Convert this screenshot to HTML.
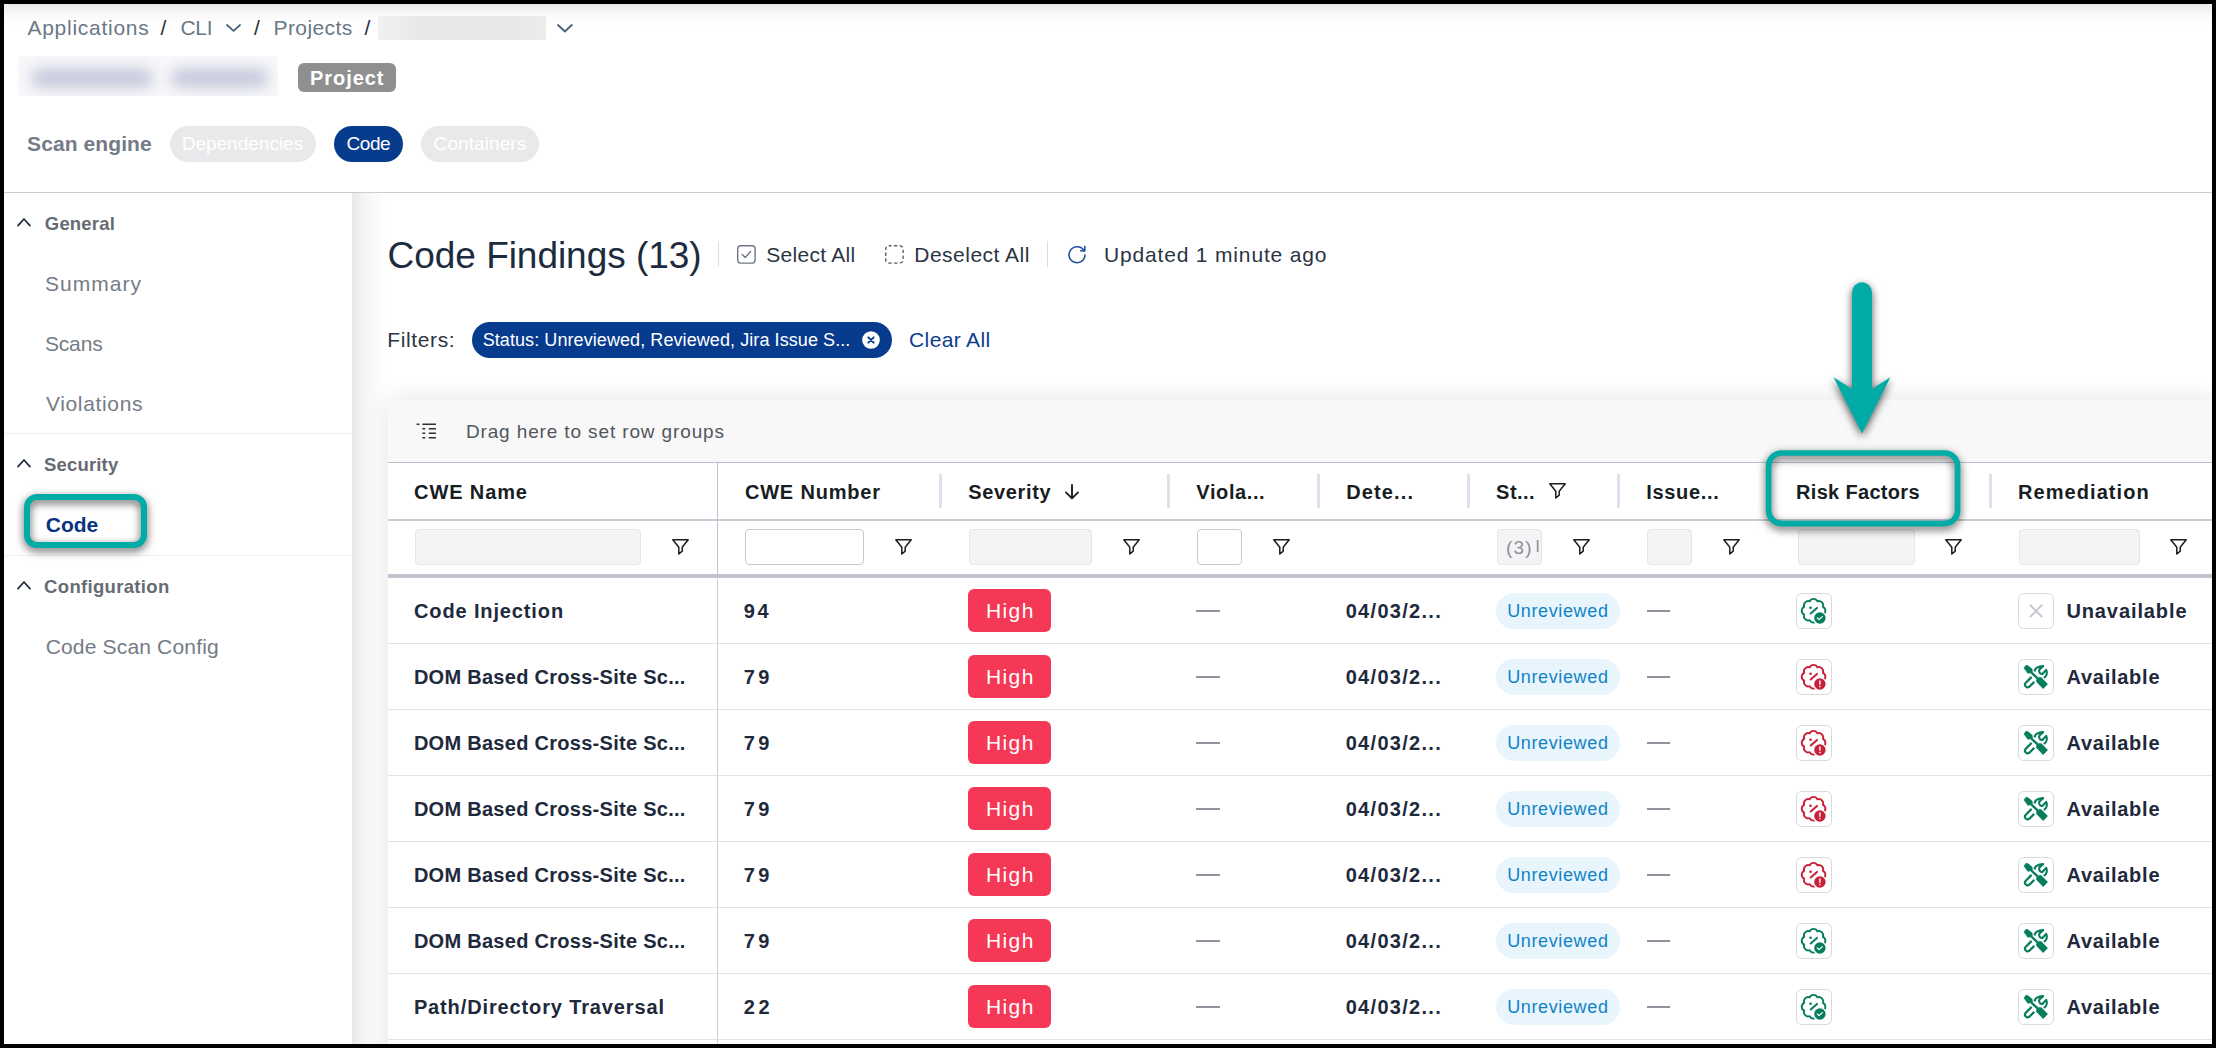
<!DOCTYPE html>
<html lang="en"><head><meta charset="utf-8"><title>Code Findings</title>
<style>
html,body{margin:0;padding:0;background:#000;}
body{width:2216px;height:1048px;overflow:hidden;position:relative;font-family:"Liberation Sans",sans-serif;}
#page{position:absolute;left:0;top:0;width:2216px;height:1048px;background:#fff;overflow:hidden;}
#frame{position:absolute;left:0;top:0;width:2208px;height:1040px;border:4px solid #000;z-index:100;pointer-events:none;}
#page div,#page span,#page svg{position:absolute;box-sizing:border-box;}
.t{white-space:pre;font-family:"Liberation Sans",sans-serif;z-index:5;}
.clip{overflow:hidden;width:33px;}
.hl{background:#ccd3df;height:1px;}
.rowl{background:#dde2eb;height:1px;left:388px;width:1824px;z-index:4;}
.colsep{background:#dde1ec;width:3px;top:474px;height:34px;}
.fin{height:36px;top:529px;border-radius:4px;}
.fin.dis{background:#f4f4f6;border:1px solid #e4e5e9;}
.fin.en{background:#fff;border:1px solid #c5c9d1;}
.badge{background:#f53856;border-radius:6px;left:968px;width:83px;height:43px;}
.pill{background:#e8f5fd;border-radius:18px;left:1496px;width:123.5px;height:36px;}
.dash{background:#8f949c;height:2px;width:23.5px;}
.ibox{width:36px;height:36px;border:1.4px solid #dadada;border-radius:5.5px;background:#fff;}
.ibox svg{left:-1.3px;top:-1.3px;}

</style></head>
<body>
<div id="page">
<div style="left:4px;top:4px;width:2208px;height:24px;background:linear-gradient(#eaeaea,#f5f5f5 28%,#fbfbfb 58%,#ffffff)"></div>
<div style="left:378px;top:16px;width:168px;height:24px;background:linear-gradient(90deg,#f1f1f1,#e8e8e9 25%,#e8e8e9 80%,#ececec)"></div>
<svg style="left:224.58px;top:23.209999999999997px" width="17.039999999999964" height="9.910000000000007" viewBox="-2 -2 17.039999999999964 9.910000000000007"><path d="M0 0 L6.519999999999982 5.910000000000007 L13.039999999999964 0" fill="none" stroke="#4a5f7a" stroke-width="1.8" stroke-linecap="round" stroke-linejoin="round"/></svg>
<svg style="left:556.08px;top:22.61px" width="17.839999999999918" height="10.510000000000005" viewBox="-2 -2 17.839999999999918 10.510000000000005"><path d="M0 0 L6.919999999999959 6.510000000000005 L13.839999999999918 0" fill="none" stroke="#4a5f7a" stroke-width="1.8" stroke-linecap="round" stroke-linejoin="round"/></svg>
<div style="left:18px;top:56px;width:260px;height:40px;background:#f8f8fa;overflow:hidden"><div style="left:13px;top:12px;width:122px;height:20px;border-radius:9px;background:#c6cadc;filter:blur(7px)"></div><div style="left:153px;top:12px;width:97px;height:20px;border-radius:9px;background:#c6cadc;filter:blur(7px)"></div></div>
<div style="left:298px;top:63px;width:98px;height:29px;border-radius:6px;background:#8f8f8f"></div>
<div style="left:170px;top:126px;width:146px;height:36px;border-radius:18px;background:#e9e9ec"></div>
<div style="left:334px;top:126px;width:69px;height:36px;border-radius:18px;background:#073b8e"></div>
<div style="left:421px;top:126px;width:118px;height:36px;border-radius:18px;background:#e9e9ec"></div>
<div style="left:4px;top:192px;width:2208px;height:1px;background:#cbcfd5"></div>
<div style="left:352px;top:193px;width:34px;height:855px;background:linear-gradient(90deg,rgba(0,0,0,.09),rgba(0,0,0,.035) 40%,rgba(0,0,0,0))"></div>
<div style="left:4px;top:433px;width:348px;height:1px;background:#eeeef3"></div>
<div style="left:4px;top:555px;width:348px;height:1px;background:#eeeef3"></div>
<svg style="left:16.22px;top:216.52px" width="15.96" height="10.61499999999998" viewBox="-2 -2 15.96 10.61499999999998"><path d="M0 6.614999999999981 L5.98 0 L11.96 6.614999999999981" fill="none" stroke="#1b2a3a" stroke-width="1.7" stroke-linecap="round" stroke-linejoin="round"/></svg>
<svg style="left:16.22px;top:458.21999999999997px" width="15.96" height="10.615000000000009" viewBox="-2 -2 15.96 10.615000000000009"><path d="M0 6.615000000000009 L5.98 0 L11.96 6.615000000000009" fill="none" stroke="#1b2a3a" stroke-width="1.7" stroke-linecap="round" stroke-linejoin="round"/></svg>
<svg style="left:16.22px;top:579.7199999999999px" width="15.96" height="10.615000000000123" viewBox="-2 -2 15.96 10.615000000000123"><path d="M0 6.615000000000123 L5.98 0 L11.96 6.615000000000123" fill="none" stroke="#1b2a3a" stroke-width="1.7" stroke-linecap="round" stroke-linejoin="round"/></svg>
<div style="left:718px;top:240.5px;width:1px;height:26px;background:#d9dce2"></div>
<div style="left:1047px;top:240.5px;width:1px;height:26px;background:#d9dce2"></div>
<svg style="left:736px;top:244px" width="21" height="21" viewBox="0 0 21 21"><rect x="1.7" y="1.7" width="17.4" height="17.4" rx="3" fill="none" stroke="#6f7782" stroke-width="1.4"/><path d="M6.2 10.6 L9.2 13.4 L14.6 7.6" fill="none" stroke="#6f7782" stroke-width="1.4" stroke-linecap="round" stroke-linejoin="round"/></svg>
<svg style="left:883.5px;top:244px" width="21" height="21" viewBox="0 0 21 21"><rect x="1.7" y="1.7" width="17.4" height="17.4" rx="3.4" fill="none" stroke="#59616c" stroke-width="1.4" stroke-dasharray="3.4 2.4" stroke-dashoffset="1"/></svg>
<svg style="left:1065px;top:243px" width="24" height="24" viewBox="0 0 24 24"><path d="M19.2 8.2 A8 8 0 1 0 20 12" fill="none" stroke="#1d4f9f" stroke-width="1.6" stroke-linecap="round"/><path d="M15.6 7.8 H19.8 V3.6" fill="none" stroke="#1d4f9f" stroke-width="1.6" stroke-linecap="round" stroke-linejoin="round"/></svg>
<div style="left:472px;top:322px;width:420px;height:36px;border-radius:18px;background:#073b8e"></div>
<svg style="left:861px;top:330px;z-index:6" width="20" height="20" viewBox="0 0 20 20"><circle cx="10" cy="10" r="8.8" fill="#fff"/><path d="M7.3 7.3 L12.7 12.7 M12.7 7.3 L7.3 12.7" stroke="#073b8e" stroke-width="1.9" stroke-linecap="round"/></svg>
<div style="left:388px;top:400px;width:1830px;height:700px;background:#fff;box-shadow:0 0 24px rgba(0,0,0,.115)"></div>
<div style="left:388px;top:400px;width:1824px;height:62px;background:#f8f8f8"></div>
<div style="left:388px;top:462px;width:1824px;height:1px;background:#b9c0cf"></div>
<svg style="left:415px;top:421px" width="24" height="20" viewBox="415 421 24 20"><g stroke="#2b3035" stroke-width="1.5"><path d="M416.6 424.2 H419.4 M422.4 424.2 H435.9"/><path d="M422.4 428.8 H425.2 M428.8 428.8 H435.9"/><path d="M422.4 433.3 H425.2 M428.8 433.3 H435.9"/><path d="M422.4 437.8 H425.2 M428.8 437.8 H435.9"/></g></svg>
<div style="left:388px;top:519px;width:1824px;height:2px;background:#c6cbd4"></div>
<div style="left:388px;top:574px;width:1824px;height:4px;background:#c1c5cd;z-index:4"></div>
<div style="left:717px;top:463px;width:1px;height:111px;background:#bcc3d0;z-index:3"></div><div style="left:717px;top:579px;width:1px;height:470px;background:#c9ced9;z-index:3"></div>
<div class="colsep" style="left:939px"></div>
<div class="colsep" style="left:1167px"></div>
<div class="colsep" style="left:1317px"></div>
<div class="colsep" style="left:1467px"></div>
<div class="colsep" style="left:1617px"></div>
<div class="colsep" style="left:1767px"></div>
<div class="colsep" style="left:1989px"></div>
<svg style="left:1062px;top:482px" width="20" height="20" viewBox="0 0 20 20"><path d="M10 3 V16.2 M4 10.4 L10 16.4 L16 10.4" fill="none" stroke="#181d1f" stroke-width="1.9" stroke-linecap="round" stroke-linejoin="round"/></svg>
<svg style="left:1548.1px;top:481.8px" width="19" height="18" viewBox="-1 -1 19 18"><path d="M0.8 0.8 H16.2 L10.2 8.2 V12.2 L6.8 15 V8.2 Z" fill="none" stroke="#181d1f" stroke-width="1.5" stroke-linejoin="round"/></svg>
<div class="fin dis" style="left:415px;width:225.5px"></div>
<div class="fin en" style="left:745px;width:119.4px"></div>
<div class="fin dis" style="left:968.6px;width:123.7px"></div>
<div class="fin en" style="left:1197px;width:44.8px"></div>
<div class="fin dis" style="left:1497.3px;width:45.2px"></div>
<div class="fin dis" style="left:1647px;width:45.4px"></div>
<div class="fin dis" style="left:1797.5px;width:117.0px"></div>
<div class="fin dis" style="left:2019px;width:120.5px"></div>
<svg style="left:670.9px;top:538.0px" width="19" height="18" viewBox="-1 -1 19 18"><path d="M0.8 0.8 H16.2 L10.2 8.2 V12.2 L6.8 15 V8.2 Z" fill="none" stroke="#181d1f" stroke-width="1.5" stroke-linejoin="round"/></svg>
<svg style="left:894.1px;top:538.0px" width="19" height="18" viewBox="-1 -1 19 18"><path d="M0.8 0.8 H16.2 L10.2 8.2 V12.2 L6.8 15 V8.2 Z" fill="none" stroke="#181d1f" stroke-width="1.5" stroke-linejoin="round"/></svg>
<svg style="left:1121.6px;top:538.0px" width="19" height="18" viewBox="-1 -1 19 18"><path d="M0.8 0.8 H16.2 L10.2 8.2 V12.2 L6.8 15 V8.2 Z" fill="none" stroke="#181d1f" stroke-width="1.5" stroke-linejoin="round"/></svg>
<svg style="left:1271.9px;top:538.0px" width="19" height="18" viewBox="-1 -1 19 18"><path d="M0.8 0.8 H16.2 L10.2 8.2 V12.2 L6.8 15 V8.2 Z" fill="none" stroke="#181d1f" stroke-width="1.5" stroke-linejoin="round"/></svg>
<svg style="left:1571.9px;top:538.0px" width="19" height="18" viewBox="-1 -1 19 18"><path d="M0.8 0.8 H16.2 L10.2 8.2 V12.2 L6.8 15 V8.2 Z" fill="none" stroke="#181d1f" stroke-width="1.5" stroke-linejoin="round"/></svg>
<svg style="left:1721.7px;top:538.0px" width="19" height="18" viewBox="-1 -1 19 18"><path d="M0.8 0.8 H16.2 L10.2 8.2 V12.2 L6.8 15 V8.2 Z" fill="none" stroke="#181d1f" stroke-width="1.5" stroke-linejoin="round"/></svg>
<svg style="left:1943.8px;top:538.0px" width="19" height="18" viewBox="-1 -1 19 18"><path d="M0.8 0.8 H16.2 L10.2 8.2 V12.2 L6.8 15 V8.2 Z" fill="none" stroke="#181d1f" stroke-width="1.5" stroke-linejoin="round"/></svg>
<svg style="left:2168.8px;top:538.0px" width="19" height="18" viewBox="-1 -1 19 18"><path d="M0.8 0.8 H16.2 L10.2 8.2 V12.2 L6.8 15 V8.2 Z" fill="none" stroke="#181d1f" stroke-width="1.5" stroke-linejoin="round"/></svg>
<div class="rowl" style="top:643px"></div>
<div class="badge" style="top:589px"></div>
<div class="dash" style="left:1196px;top:610px"></div>
<div class="pill" style="top:593px"></div>
<div class="dash" style="left:1646.6px;top:610px"></div>
<div class="ibox" style="left:1796px;top:593px"><svg width="36" height="36" viewBox="0 0 36 36"><path d="M21.43 8.37 A4.3 4.3 0 0 1 26.93 13.87 A4.3 4.3 0 0 1 26.93 21.63 A4.3 4.3 0 0 1 21.43 27.13 A4.3 4.3 0 0 1 13.67 27.13 A4.3 4.3 0 0 1 8.17 21.63 A4.3 4.3 0 0 1 8.17 13.87 A4.3 4.3 0 0 1 13.67 8.37 A4.3 4.3 0 0 1 21.43 8.37 Z" fill="none" stroke="#067d5c" stroke-width="1.9" stroke-linejoin="round"/><circle cx="14.55" cy="14.75" r="1.35" fill="#067d5c"/><path d="M14.7 20.5 L21.0 14.9" stroke="#067d5c" stroke-width="2.0" stroke-linecap="round"/><circle cx="23.9" cy="25.0" r="6.9" fill="#fff"/><circle cx="23.9" cy="25.0" r="5.7" fill="#067d5c"/><path d="M21.4 25.0 L23.1 26.6 L26.3 23.6" fill="none" stroke="#fff" stroke-width="1.25" stroke-linecap="round" stroke-linejoin="round"/></svg></div>
<div class="ibox" style="left:2018px;top:593px"><svg width="36" height="36" viewBox="0 0 36 36"><path d="M11.9 11.7 L24.3 24.1 M24.3 11.7 L11.9 24.1" stroke="#c3c6ce" stroke-width="1.9" stroke-linecap="butt"/></svg></div>
<div class="rowl" style="top:709px"></div>
<div class="badge" style="top:655px"></div>
<div class="dash" style="left:1196px;top:676px"></div>
<div class="pill" style="top:659px"></div>
<div class="dash" style="left:1646.6px;top:676px"></div>
<div class="ibox" style="left:1796px;top:659px"><svg width="36" height="36" viewBox="0 0 36 36"><path d="M21.43 8.37 A4.3 4.3 0 0 1 26.93 13.87 A4.3 4.3 0 0 1 26.93 21.63 A4.3 4.3 0 0 1 21.43 27.13 A4.3 4.3 0 0 1 13.67 27.13 A4.3 4.3 0 0 1 8.17 21.63 A4.3 4.3 0 0 1 8.17 13.87 A4.3 4.3 0 0 1 13.67 8.37 A4.3 4.3 0 0 1 21.43 8.37 Z" fill="none" stroke="#c9203a" stroke-width="1.9" stroke-linejoin="round"/><circle cx="14.55" cy="14.75" r="1.35" fill="#c9203a"/><path d="M14.7 20.5 L21.0 14.9" stroke="#c9203a" stroke-width="2.0" stroke-linecap="round"/><circle cx="23.9" cy="25.0" r="6.9" fill="#fff"/><circle cx="23.9" cy="25.0" r="5.7" fill="#c9203a"/><path d="M23.9 21.9 V25.3" stroke="#fff" stroke-width="1.4" stroke-linecap="round"/><circle cx="23.9" cy="27.6" r="0.8" fill="#fff"/></svg></div>
<div class="ibox" style="left:2018px;top:659px"><svg width="36" height="36" viewBox="2.3 2.1 36 36"><path d="M8.1 11.1 L10.4 8.1 L12.6 8.8 L16.6 12.2 L16.8 15.7 L12.2 16.6 Z" fill="#067d5c" stroke="#067d5c" stroke-width="0.3" stroke-linejoin="round"/><path d="M15.6 15.6 L22.2 21.8" stroke="#067d5c" stroke-width="2.4"/><path d="M20.7 22.6 L23.7 20.3 L25.6 20.7 L32.0 27.2 L27.5 31.8 L20.7 24.8 Z" fill="#067d5c" stroke="#067d5c" stroke-width="0.4" stroke-linejoin="round"/><path d="M15.9 20.0 L9.9 26.0 A2.7 2.7 0 0 0 13.7 29.8 L18.5 25.0" fill="none" stroke="#067d5c" stroke-width="2.2" stroke-linecap="butt"/><path d="M19.0 14.6 C18.7 11.4 22.6 9.3 27.4 9.2 L23.7 12.6 C22.7 14.9 24.3 17.4 26.6 17.1 L30.5 13.0 C32.0 15.9 30.7 19.2 28.2 21.0" fill="none" stroke="#067d5c" stroke-width="2.2" stroke-linejoin="round"/></svg></div>
<div class="rowl" style="top:775px"></div>
<div class="badge" style="top:721px"></div>
<div class="dash" style="left:1196px;top:742px"></div>
<div class="pill" style="top:725px"></div>
<div class="dash" style="left:1646.6px;top:742px"></div>
<div class="ibox" style="left:1796px;top:725px"><svg width="36" height="36" viewBox="0 0 36 36"><path d="M21.43 8.37 A4.3 4.3 0 0 1 26.93 13.87 A4.3 4.3 0 0 1 26.93 21.63 A4.3 4.3 0 0 1 21.43 27.13 A4.3 4.3 0 0 1 13.67 27.13 A4.3 4.3 0 0 1 8.17 21.63 A4.3 4.3 0 0 1 8.17 13.87 A4.3 4.3 0 0 1 13.67 8.37 A4.3 4.3 0 0 1 21.43 8.37 Z" fill="none" stroke="#c9203a" stroke-width="1.9" stroke-linejoin="round"/><circle cx="14.55" cy="14.75" r="1.35" fill="#c9203a"/><path d="M14.7 20.5 L21.0 14.9" stroke="#c9203a" stroke-width="2.0" stroke-linecap="round"/><circle cx="23.9" cy="25.0" r="6.9" fill="#fff"/><circle cx="23.9" cy="25.0" r="5.7" fill="#c9203a"/><path d="M23.9 21.9 V25.3" stroke="#fff" stroke-width="1.4" stroke-linecap="round"/><circle cx="23.9" cy="27.6" r="0.8" fill="#fff"/></svg></div>
<div class="ibox" style="left:2018px;top:725px"><svg width="36" height="36" viewBox="2.3 2.1 36 36"><path d="M8.1 11.1 L10.4 8.1 L12.6 8.8 L16.6 12.2 L16.8 15.7 L12.2 16.6 Z" fill="#067d5c" stroke="#067d5c" stroke-width="0.3" stroke-linejoin="round"/><path d="M15.6 15.6 L22.2 21.8" stroke="#067d5c" stroke-width="2.4"/><path d="M20.7 22.6 L23.7 20.3 L25.6 20.7 L32.0 27.2 L27.5 31.8 L20.7 24.8 Z" fill="#067d5c" stroke="#067d5c" stroke-width="0.4" stroke-linejoin="round"/><path d="M15.9 20.0 L9.9 26.0 A2.7 2.7 0 0 0 13.7 29.8 L18.5 25.0" fill="none" stroke="#067d5c" stroke-width="2.2" stroke-linecap="butt"/><path d="M19.0 14.6 C18.7 11.4 22.6 9.3 27.4 9.2 L23.7 12.6 C22.7 14.9 24.3 17.4 26.6 17.1 L30.5 13.0 C32.0 15.9 30.7 19.2 28.2 21.0" fill="none" stroke="#067d5c" stroke-width="2.2" stroke-linejoin="round"/></svg></div>
<div class="rowl" style="top:841px"></div>
<div class="badge" style="top:787px"></div>
<div class="dash" style="left:1196px;top:808px"></div>
<div class="pill" style="top:791px"></div>
<div class="dash" style="left:1646.6px;top:808px"></div>
<div class="ibox" style="left:1796px;top:791px"><svg width="36" height="36" viewBox="0 0 36 36"><path d="M21.43 8.37 A4.3 4.3 0 0 1 26.93 13.87 A4.3 4.3 0 0 1 26.93 21.63 A4.3 4.3 0 0 1 21.43 27.13 A4.3 4.3 0 0 1 13.67 27.13 A4.3 4.3 0 0 1 8.17 21.63 A4.3 4.3 0 0 1 8.17 13.87 A4.3 4.3 0 0 1 13.67 8.37 A4.3 4.3 0 0 1 21.43 8.37 Z" fill="none" stroke="#c9203a" stroke-width="1.9" stroke-linejoin="round"/><circle cx="14.55" cy="14.75" r="1.35" fill="#c9203a"/><path d="M14.7 20.5 L21.0 14.9" stroke="#c9203a" stroke-width="2.0" stroke-linecap="round"/><circle cx="23.9" cy="25.0" r="6.9" fill="#fff"/><circle cx="23.9" cy="25.0" r="5.7" fill="#c9203a"/><path d="M23.9 21.9 V25.3" stroke="#fff" stroke-width="1.4" stroke-linecap="round"/><circle cx="23.9" cy="27.6" r="0.8" fill="#fff"/></svg></div>
<div class="ibox" style="left:2018px;top:791px"><svg width="36" height="36" viewBox="2.3 2.1 36 36"><path d="M8.1 11.1 L10.4 8.1 L12.6 8.8 L16.6 12.2 L16.8 15.7 L12.2 16.6 Z" fill="#067d5c" stroke="#067d5c" stroke-width="0.3" stroke-linejoin="round"/><path d="M15.6 15.6 L22.2 21.8" stroke="#067d5c" stroke-width="2.4"/><path d="M20.7 22.6 L23.7 20.3 L25.6 20.7 L32.0 27.2 L27.5 31.8 L20.7 24.8 Z" fill="#067d5c" stroke="#067d5c" stroke-width="0.4" stroke-linejoin="round"/><path d="M15.9 20.0 L9.9 26.0 A2.7 2.7 0 0 0 13.7 29.8 L18.5 25.0" fill="none" stroke="#067d5c" stroke-width="2.2" stroke-linecap="butt"/><path d="M19.0 14.6 C18.7 11.4 22.6 9.3 27.4 9.2 L23.7 12.6 C22.7 14.9 24.3 17.4 26.6 17.1 L30.5 13.0 C32.0 15.9 30.7 19.2 28.2 21.0" fill="none" stroke="#067d5c" stroke-width="2.2" stroke-linejoin="round"/></svg></div>
<div class="rowl" style="top:907px"></div>
<div class="badge" style="top:853px"></div>
<div class="dash" style="left:1196px;top:874px"></div>
<div class="pill" style="top:857px"></div>
<div class="dash" style="left:1646.6px;top:874px"></div>
<div class="ibox" style="left:1796px;top:857px"><svg width="36" height="36" viewBox="0 0 36 36"><path d="M21.43 8.37 A4.3 4.3 0 0 1 26.93 13.87 A4.3 4.3 0 0 1 26.93 21.63 A4.3 4.3 0 0 1 21.43 27.13 A4.3 4.3 0 0 1 13.67 27.13 A4.3 4.3 0 0 1 8.17 21.63 A4.3 4.3 0 0 1 8.17 13.87 A4.3 4.3 0 0 1 13.67 8.37 A4.3 4.3 0 0 1 21.43 8.37 Z" fill="none" stroke="#c9203a" stroke-width="1.9" stroke-linejoin="round"/><circle cx="14.55" cy="14.75" r="1.35" fill="#c9203a"/><path d="M14.7 20.5 L21.0 14.9" stroke="#c9203a" stroke-width="2.0" stroke-linecap="round"/><circle cx="23.9" cy="25.0" r="6.9" fill="#fff"/><circle cx="23.9" cy="25.0" r="5.7" fill="#c9203a"/><path d="M23.9 21.9 V25.3" stroke="#fff" stroke-width="1.4" stroke-linecap="round"/><circle cx="23.9" cy="27.6" r="0.8" fill="#fff"/></svg></div>
<div class="ibox" style="left:2018px;top:857px"><svg width="36" height="36" viewBox="2.3 2.1 36 36"><path d="M8.1 11.1 L10.4 8.1 L12.6 8.8 L16.6 12.2 L16.8 15.7 L12.2 16.6 Z" fill="#067d5c" stroke="#067d5c" stroke-width="0.3" stroke-linejoin="round"/><path d="M15.6 15.6 L22.2 21.8" stroke="#067d5c" stroke-width="2.4"/><path d="M20.7 22.6 L23.7 20.3 L25.6 20.7 L32.0 27.2 L27.5 31.8 L20.7 24.8 Z" fill="#067d5c" stroke="#067d5c" stroke-width="0.4" stroke-linejoin="round"/><path d="M15.9 20.0 L9.9 26.0 A2.7 2.7 0 0 0 13.7 29.8 L18.5 25.0" fill="none" stroke="#067d5c" stroke-width="2.2" stroke-linecap="butt"/><path d="M19.0 14.6 C18.7 11.4 22.6 9.3 27.4 9.2 L23.7 12.6 C22.7 14.9 24.3 17.4 26.6 17.1 L30.5 13.0 C32.0 15.9 30.7 19.2 28.2 21.0" fill="none" stroke="#067d5c" stroke-width="2.2" stroke-linejoin="round"/></svg></div>
<div class="rowl" style="top:973px"></div>
<div class="badge" style="top:919px"></div>
<div class="dash" style="left:1196px;top:940px"></div>
<div class="pill" style="top:923px"></div>
<div class="dash" style="left:1646.6px;top:940px"></div>
<div class="ibox" style="left:1796px;top:923px"><svg width="36" height="36" viewBox="0 0 36 36"><path d="M21.43 8.37 A4.3 4.3 0 0 1 26.93 13.87 A4.3 4.3 0 0 1 26.93 21.63 A4.3 4.3 0 0 1 21.43 27.13 A4.3 4.3 0 0 1 13.67 27.13 A4.3 4.3 0 0 1 8.17 21.63 A4.3 4.3 0 0 1 8.17 13.87 A4.3 4.3 0 0 1 13.67 8.37 A4.3 4.3 0 0 1 21.43 8.37 Z" fill="none" stroke="#067d5c" stroke-width="1.9" stroke-linejoin="round"/><circle cx="14.55" cy="14.75" r="1.35" fill="#067d5c"/><path d="M14.7 20.5 L21.0 14.9" stroke="#067d5c" stroke-width="2.0" stroke-linecap="round"/><circle cx="23.9" cy="25.0" r="6.9" fill="#fff"/><circle cx="23.9" cy="25.0" r="5.7" fill="#067d5c"/><path d="M21.4 25.0 L23.1 26.6 L26.3 23.6" fill="none" stroke="#fff" stroke-width="1.25" stroke-linecap="round" stroke-linejoin="round"/></svg></div>
<div class="ibox" style="left:2018px;top:923px"><svg width="36" height="36" viewBox="2.3 2.1 36 36"><path d="M8.1 11.1 L10.4 8.1 L12.6 8.8 L16.6 12.2 L16.8 15.7 L12.2 16.6 Z" fill="#067d5c" stroke="#067d5c" stroke-width="0.3" stroke-linejoin="round"/><path d="M15.6 15.6 L22.2 21.8" stroke="#067d5c" stroke-width="2.4"/><path d="M20.7 22.6 L23.7 20.3 L25.6 20.7 L32.0 27.2 L27.5 31.8 L20.7 24.8 Z" fill="#067d5c" stroke="#067d5c" stroke-width="0.4" stroke-linejoin="round"/><path d="M15.9 20.0 L9.9 26.0 A2.7 2.7 0 0 0 13.7 29.8 L18.5 25.0" fill="none" stroke="#067d5c" stroke-width="2.2" stroke-linecap="butt"/><path d="M19.0 14.6 C18.7 11.4 22.6 9.3 27.4 9.2 L23.7 12.6 C22.7 14.9 24.3 17.4 26.6 17.1 L30.5 13.0 C32.0 15.9 30.7 19.2 28.2 21.0" fill="none" stroke="#067d5c" stroke-width="2.2" stroke-linejoin="round"/></svg></div>
<div class="rowl" style="top:1039px"></div>
<div class="badge" style="top:985px"></div>
<div class="dash" style="left:1196px;top:1006px"></div>
<div class="pill" style="top:989px"></div>
<div class="dash" style="left:1646.6px;top:1006px"></div>
<div class="ibox" style="left:1796px;top:989px"><svg width="36" height="36" viewBox="0 0 36 36"><path d="M21.43 8.37 A4.3 4.3 0 0 1 26.93 13.87 A4.3 4.3 0 0 1 26.93 21.63 A4.3 4.3 0 0 1 21.43 27.13 A4.3 4.3 0 0 1 13.67 27.13 A4.3 4.3 0 0 1 8.17 21.63 A4.3 4.3 0 0 1 8.17 13.87 A4.3 4.3 0 0 1 13.67 8.37 A4.3 4.3 0 0 1 21.43 8.37 Z" fill="none" stroke="#067d5c" stroke-width="1.9" stroke-linejoin="round"/><circle cx="14.55" cy="14.75" r="1.35" fill="#067d5c"/><path d="M14.7 20.5 L21.0 14.9" stroke="#067d5c" stroke-width="2.0" stroke-linecap="round"/><circle cx="23.9" cy="25.0" r="6.9" fill="#fff"/><circle cx="23.9" cy="25.0" r="5.7" fill="#067d5c"/><path d="M21.4 25.0 L23.1 26.6 L26.3 23.6" fill="none" stroke="#fff" stroke-width="1.25" stroke-linecap="round" stroke-linejoin="round"/></svg></div>
<div class="ibox" style="left:2018px;top:989px"><svg width="36" height="36" viewBox="2.3 2.1 36 36"><path d="M8.1 11.1 L10.4 8.1 L12.6 8.8 L16.6 12.2 L16.8 15.7 L12.2 16.6 Z" fill="#067d5c" stroke="#067d5c" stroke-width="0.3" stroke-linejoin="round"/><path d="M15.6 15.6 L22.2 21.8" stroke="#067d5c" stroke-width="2.4"/><path d="M20.7 22.6 L23.7 20.3 L25.6 20.7 L32.0 27.2 L27.5 31.8 L20.7 24.8 Z" fill="#067d5c" stroke="#067d5c" stroke-width="0.4" stroke-linejoin="round"/><path d="M15.9 20.0 L9.9 26.0 A2.7 2.7 0 0 0 13.7 29.8 L18.5 25.0" fill="none" stroke="#067d5c" stroke-width="2.2" stroke-linecap="butt"/><path d="M19.0 14.6 C18.7 11.4 22.6 9.3 27.4 9.2 L23.7 12.6 C22.7 14.9 24.3 17.4 26.6 17.1 L30.5 13.0 C32.0 15.9 30.7 19.2 28.2 21.0" fill="none" stroke="#067d5c" stroke-width="2.2" stroke-linejoin="round"/></svg></div>
<svg style="left:8px;top:478px;z-index:20;filter:drop-shadow(0.3px 3px 4px rgba(0,0,0,.68))" width="160" height="90" viewBox="8 478 160 90"><rect x="27" y="497" width="117" height="48" rx="10" fill="none" stroke="#02aca6" stroke-width="6"/></svg>
<svg style="left:1750px;top:435px;z-index:20;filter:drop-shadow(0.3px 3px 4px rgba(0,0,0,.68))" width="230" height="110" viewBox="1750 435 230 110"><rect x="1768.6" y="453" width="189" height="70.6" rx="13" fill="none" stroke="#02aca6" stroke-width="5.6"/></svg>
<svg style="left:1810px;top:270px;z-index:20;filter:drop-shadow(0.3px 3px 4px rgba(0,0,0,.68))" width="110" height="180" viewBox="1810 270 110 180"><path d="M1862 292.2 V395" stroke="#02aca6" stroke-width="20" stroke-linecap="round" fill="none"/><path d="M1833.6 377.2 L1852 388.9 L1872 388.9 L1890.4 377.2 L1862 433.5 Z" fill="#02aca6"/></svg>
<!-- text layer -->
<span class="t" style="left:27.4px;top:17.0px;font-size:21px;line-height:21px;font-weight:400;color:#6b7785;letter-spacing:0.74px">Applications</span>
<span class="t" style="left:160.4px;top:17.0px;font-size:21px;line-height:21px;font-weight:400;color:#1f2d3d;letter-spacing:0px">/</span>
<span class="t" style="left:180.5px;top:17.0px;font-size:21px;line-height:21px;font-weight:400;color:#6b7785;letter-spacing:-0.3px">CLI</span>
<span class="t" style="left:253.9px;top:17.0px;font-size:21px;line-height:21px;font-weight:400;color:#1f2d3d;letter-spacing:0px">/</span>
<span class="t" style="left:273.5px;top:17.0px;font-size:21px;line-height:21px;font-weight:400;color:#6b7785;letter-spacing:0.4px">Projects</span>
<span class="t" style="left:364.4px;top:17.0px;font-size:21px;line-height:21px;font-weight:400;color:#1f2d3d;letter-spacing:0px">/</span>
<span class="t" style="left:310.0px;top:68.1px;font-size:20px;line-height:20px;font-weight:700;color:#ffffff;letter-spacing:0.95px">Project</span>
<span class="t" style="left:27.1px;top:133.2px;font-size:21px;line-height:21px;font-weight:700;color:#747b86;letter-spacing:0.09px">Scan engine</span>
<span class="t" style="left:181.7px;top:134.3px;font-size:19px;line-height:19px;font-weight:400;color:#ffffff;letter-spacing:-0.0px">Dependencies</span>
<span class="t" style="left:346.6px;top:134.3px;font-size:19px;line-height:19px;font-weight:400;color:#ffffff;letter-spacing:-0.45px">Code</span>
<span class="t" style="left:433.6px;top:134.3px;font-size:19px;line-height:19px;font-weight:400;color:#ffffff;letter-spacing:0.08px">Containers</span>
<span class="t" style="left:44.8px;top:214.6px;font-size:18.5px;line-height:18.5px;font-weight:700;color:#666b73;letter-spacing:0.19px">General</span>
<span class="t" style="left:44.9px;top:272.9px;font-size:21px;line-height:21px;font-weight:400;color:#757b85;letter-spacing:1.05px">Summary</span>
<span class="t" style="left:44.9px;top:332.7px;font-size:21px;line-height:21px;font-weight:400;color:#757b85;letter-spacing:-0.15px">Scans</span>
<span class="t" style="left:45.9px;top:392.8px;font-size:21px;line-height:21px;font-weight:400;color:#757b85;letter-spacing:0.66px">Violations</span>
<span class="t" style="left:44.1px;top:456.1px;font-size:18.5px;line-height:18.5px;font-weight:700;color:#666b73;letter-spacing:0.16px">Security</span>
<span class="t" style="left:45.8px;top:513.7px;font-size:21px;line-height:21px;font-weight:700;color:#0b3282;letter-spacing:-0.08px">Code</span>
<span class="t" style="left:44.1px;top:577.5px;font-size:18.5px;line-height:18.5px;font-weight:700;color:#666b73;letter-spacing:0.32px">Configuration</span>
<span class="t" style="left:45.7px;top:636.4px;font-size:21px;line-height:21px;font-weight:400;color:#757b85;letter-spacing:0.17px">Code Scan Config</span>
<span class="t" style="left:387.6px;top:236.7px;font-size:37px;line-height:37px;font-weight:400;color:#1c2b3e;letter-spacing:-0.04px">Code Findings (13)</span>
<span class="t" style="left:766.3px;top:244.2px;font-size:21px;line-height:21px;font-weight:400;color:#2b3543;letter-spacing:0.28px">Select All</span>
<span class="t" style="left:914.3px;top:244.2px;font-size:21px;line-height:21px;font-weight:400;color:#2b3543;letter-spacing:0.49px">Deselect All</span>
<span class="t" style="left:1103.9px;top:244.2px;font-size:21px;line-height:21px;font-weight:400;color:#2b3543;letter-spacing:0.84px">Updated 1 minute ago</span>
<span class="t" style="left:387.3px;top:329.2px;font-size:21px;line-height:21px;font-weight:400;color:#2b3543;letter-spacing:0.63px">Filters:</span>
<span class="t" style="left:482.7px;top:330.8px;font-size:18px;line-height:18px;font-weight:400;color:#ffffff;letter-spacing:0.08px">Status: Unreviewed, Reviewed, Jira Issue S...</span>
<span class="t" style="left:909.1px;top:329.2px;font-size:21px;line-height:21px;font-weight:400;color:#0d3b8e;letter-spacing:0.36px">Clear All</span>
<span class="t" style="left:465.9px;top:421.9px;font-size:19px;line-height:19px;font-weight:400;color:#50565e;letter-spacing:0.87px">Drag here to set row groups</span>
<span class="t" style="left:414.1px;top:481.5px;font-size:20px;line-height:20px;font-weight:700;color:#181d1f;letter-spacing:0.88px">CWE Name</span>
<span class="t" style="left:744.9px;top:481.5px;font-size:20px;line-height:20px;font-weight:700;color:#181d1f;letter-spacing:0.82px">CWE Number</span>
<span class="t" style="left:968.3px;top:481.5px;font-size:20px;line-height:20px;font-weight:700;color:#181d1f;letter-spacing:0.64px">Severity</span>
<span class="t" style="left:1196.3px;top:481.5px;font-size:20px;line-height:20px;font-weight:700;color:#181d1f;letter-spacing:0.61px">Viola...</span>
<span class="t" style="left:1346.2px;top:481.5px;font-size:20px;line-height:20px;font-weight:700;color:#181d1f;letter-spacing:1.14px">Dete...</span>
<span class="t" style="left:1496.1px;top:481.5px;font-size:20px;line-height:20px;font-weight:700;color:#181d1f;letter-spacing:0.45px">St...</span>
<span class="t" style="left:1646.2px;top:481.5px;font-size:20px;line-height:20px;font-weight:700;color:#181d1f;letter-spacing:0.67px">Issue...</span>
<span class="t" style="left:1796.0px;top:481.5px;font-size:20px;line-height:20px;font-weight:700;color:#181d1f;letter-spacing:0.32px;z-index:30">Risk Factors</span>
<span class="t" style="left:2018.0px;top:481.5px;font-size:20px;line-height:20px;font-weight:700;color:#181d1f;letter-spacing:1.07px">Remediation</span>
<span class="t" style="left:1506.0px;top:537.7px;font-size:19px;line-height:19px;font-weight:400;color:#8d9097;letter-spacing:1.15px">(3)</span>
<span class="t" style="left:1535.2px;top:538.1px;font-size:17px;line-height:17px;font-weight:400;color:#8d9097;letter-spacing:0px">I</span>
<span class="t" style="left:414.0px;top:600.9px;font-size:20px;line-height:20px;font-weight:700;color:#1e293b;letter-spacing:0.87px">Code Injection</span>
<span class="t" style="left:743.7px;top:600.9px;font-size:20px;line-height:20px;font-weight:700;color:#1e293b;letter-spacing:2.66px">94</span>
<span class="t" style="left:985.9px;top:600.1px;font-size:21px;line-height:21px;font-weight:400;color:#ffffff;letter-spacing:1.41px">High</span>
<span class="t" style="left:1345.7px;top:600.9px;font-size:20px;line-height:20px;font-weight:700;color:#1e293b;letter-spacing:1.3px">04/03/2...</span>
<span class="t" style="left:1507.2px;top:602.4px;font-size:18px;line-height:18px;font-weight:400;color:#1083c7;letter-spacing:0.63px">Unreviewed</span>
<span class="t" style="left:2066.4px;top:600.9px;font-size:20px;line-height:20px;font-weight:700;color:#1e293b;letter-spacing:0.9px">Unavailable</span>
<span class="t" style="left:413.9px;top:666.9px;font-size:20px;line-height:20px;font-weight:700;color:#1e293b;letter-spacing:0.28px">DOM Based Cross-Site Sc...</span>
<span class="t" style="left:743.7px;top:666.9px;font-size:20px;line-height:20px;font-weight:700;color:#1e293b;letter-spacing:3.53px">79</span>
<span class="t" style="left:985.9px;top:666.1px;font-size:21px;line-height:21px;font-weight:400;color:#ffffff;letter-spacing:1.41px">High</span>
<span class="t" style="left:1345.7px;top:666.9px;font-size:20px;line-height:20px;font-weight:700;color:#1e293b;letter-spacing:1.3px">04/03/2...</span>
<span class="t" style="left:1507.2px;top:668.4px;font-size:18px;line-height:18px;font-weight:400;color:#1083c7;letter-spacing:0.63px">Unreviewed</span>
<span class="t" style="left:2066.5px;top:666.9px;font-size:20px;line-height:20px;font-weight:700;color:#1e293b;letter-spacing:0.74px">Available</span>
<span class="t" style="left:413.9px;top:732.9px;font-size:20px;line-height:20px;font-weight:700;color:#1e293b;letter-spacing:0.28px">DOM Based Cross-Site Sc...</span>
<span class="t" style="left:743.7px;top:732.9px;font-size:20px;line-height:20px;font-weight:700;color:#1e293b;letter-spacing:3.53px">79</span>
<span class="t" style="left:985.9px;top:732.1px;font-size:21px;line-height:21px;font-weight:400;color:#ffffff;letter-spacing:1.41px">High</span>
<span class="t" style="left:1345.7px;top:732.9px;font-size:20px;line-height:20px;font-weight:700;color:#1e293b;letter-spacing:1.3px">04/03/2...</span>
<span class="t" style="left:1507.2px;top:734.4px;font-size:18px;line-height:18px;font-weight:400;color:#1083c7;letter-spacing:0.63px">Unreviewed</span>
<span class="t" style="left:2066.5px;top:732.9px;font-size:20px;line-height:20px;font-weight:700;color:#1e293b;letter-spacing:0.74px">Available</span>
<span class="t" style="left:413.9px;top:798.9px;font-size:20px;line-height:20px;font-weight:700;color:#1e293b;letter-spacing:0.28px">DOM Based Cross-Site Sc...</span>
<span class="t" style="left:743.7px;top:798.9px;font-size:20px;line-height:20px;font-weight:700;color:#1e293b;letter-spacing:3.53px">79</span>
<span class="t" style="left:985.9px;top:798.1px;font-size:21px;line-height:21px;font-weight:400;color:#ffffff;letter-spacing:1.41px">High</span>
<span class="t" style="left:1345.7px;top:798.9px;font-size:20px;line-height:20px;font-weight:700;color:#1e293b;letter-spacing:1.3px">04/03/2...</span>
<span class="t" style="left:1507.2px;top:800.4px;font-size:18px;line-height:18px;font-weight:400;color:#1083c7;letter-spacing:0.63px">Unreviewed</span>
<span class="t" style="left:2066.5px;top:798.9px;font-size:20px;line-height:20px;font-weight:700;color:#1e293b;letter-spacing:0.74px">Available</span>
<span class="t" style="left:413.9px;top:864.9px;font-size:20px;line-height:20px;font-weight:700;color:#1e293b;letter-spacing:0.28px">DOM Based Cross-Site Sc...</span>
<span class="t" style="left:743.7px;top:864.9px;font-size:20px;line-height:20px;font-weight:700;color:#1e293b;letter-spacing:3.53px">79</span>
<span class="t" style="left:985.9px;top:864.1px;font-size:21px;line-height:21px;font-weight:400;color:#ffffff;letter-spacing:1.41px">High</span>
<span class="t" style="left:1345.7px;top:864.9px;font-size:20px;line-height:20px;font-weight:700;color:#1e293b;letter-spacing:1.3px">04/03/2...</span>
<span class="t" style="left:1507.2px;top:866.4px;font-size:18px;line-height:18px;font-weight:400;color:#1083c7;letter-spacing:0.63px">Unreviewed</span>
<span class="t" style="left:2066.5px;top:864.9px;font-size:20px;line-height:20px;font-weight:700;color:#1e293b;letter-spacing:0.74px">Available</span>
<span class="t" style="left:413.9px;top:930.9px;font-size:20px;line-height:20px;font-weight:700;color:#1e293b;letter-spacing:0.28px">DOM Based Cross-Site Sc...</span>
<span class="t" style="left:743.7px;top:930.9px;font-size:20px;line-height:20px;font-weight:700;color:#1e293b;letter-spacing:3.53px">79</span>
<span class="t" style="left:985.9px;top:930.1px;font-size:21px;line-height:21px;font-weight:400;color:#ffffff;letter-spacing:1.41px">High</span>
<span class="t" style="left:1345.7px;top:930.9px;font-size:20px;line-height:20px;font-weight:700;color:#1e293b;letter-spacing:1.3px">04/03/2...</span>
<span class="t" style="left:1507.2px;top:932.4px;font-size:18px;line-height:18px;font-weight:400;color:#1083c7;letter-spacing:0.63px">Unreviewed</span>
<span class="t" style="left:2066.5px;top:930.9px;font-size:20px;line-height:20px;font-weight:700;color:#1e293b;letter-spacing:0.74px">Available</span>
<span class="t" style="left:413.9px;top:996.9px;font-size:20px;line-height:20px;font-weight:700;color:#1e293b;letter-spacing:0.87px">Path/Directory Traversal</span>
<span class="t" style="left:743.7px;top:996.9px;font-size:20px;line-height:20px;font-weight:700;color:#1e293b;letter-spacing:3.57px">22</span>
<span class="t" style="left:985.9px;top:996.1px;font-size:21px;line-height:21px;font-weight:400;color:#ffffff;letter-spacing:1.41px">High</span>
<span class="t" style="left:1345.7px;top:996.9px;font-size:20px;line-height:20px;font-weight:700;color:#1e293b;letter-spacing:1.3px">04/03/2...</span>
<span class="t" style="left:1507.2px;top:998.4px;font-size:18px;line-height:18px;font-weight:400;color:#1083c7;letter-spacing:0.63px">Unreviewed</span>
<span class="t" style="left:2066.5px;top:996.9px;font-size:20px;line-height:20px;font-weight:700;color:#1e293b;letter-spacing:0.74px">Available</span>
</div>
<div id="frame"></div>
</body></html>
